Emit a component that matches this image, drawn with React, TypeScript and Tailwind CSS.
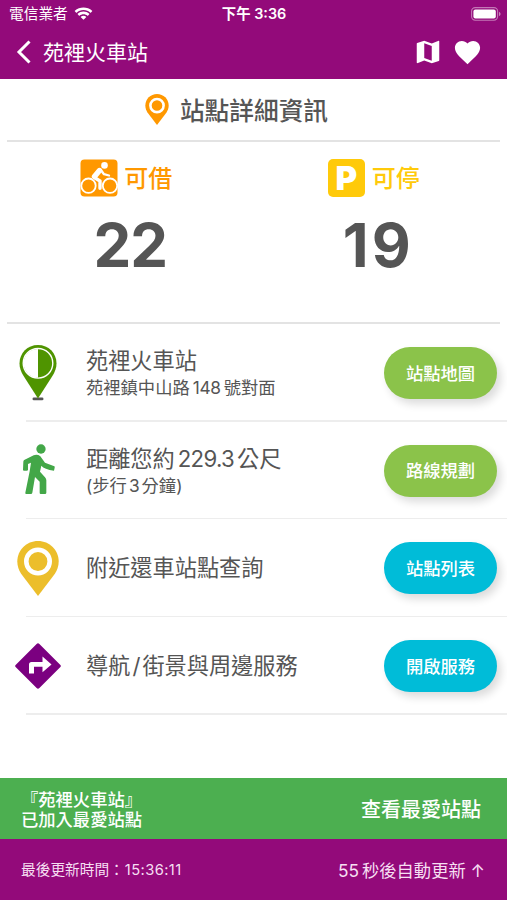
import React from 'react';
import { IoMdMap, IoMdHeart } from 'react-icons/io';

interface IconProps {
  className?: string;
}

const IconWifi: React.FC<IconProps> = ({ className }) => (
  <svg viewBox="0 0 18 13" className={className} fill="currentColor">
    <path d="M9 2.6c2.5 0 4.8 1 6.5 2.6.1.1.3.1.4 0l1.3-1.3c.1-.1.1-.4 0-.5C12.700-.8 5.300-.8.8 3.400c-.1.1-.1.400 0 .5l1.300 1.300c.1.1.3.1.4 0C4.200 3.600 6.500 2.600 9 2.600z" />
    <path d="M9 6.700c1.400 0 2.700.5 3.700 1.400.1.1.3.1.5 0l1.300-1.300c.1-.1.1-.4 0-.5-3.100-2.900-7.900-2.900-11 0-.1.1-.1.4 0 .5l1.300 1.300c.1.1.3.1.5 0 1-.9 2.300-1.400 3.700-1.400z" />
    <path d="M11.500 9.600c.1-.1.1-.4 0-.5-1.400-1.200-3.600-1.200-5 0-.1.1-.1.4 0 .5l2.200 2.200c.2.2.4.2.6 0z" />
  </svg>
);

const IconBattery: React.FC<IconProps> = ({ className }) => (
  <svg viewBox="0 0 30 14" className={className}>
    <rect x="0.600" y="0.600" width="26" height="12.600" rx="3.600" fill="none" stroke="#fff" strokeOpacity="0.45" strokeWidth="1.100" />
    <rect x="2.400" y="2.400" width="22.400" height="9" rx="2" fill="#fff" />
    <path d="M28 4.800c1 .5 1.500 1.200 1.500 2.100S29 8.500 28 9z" fill="#fff" fillOpacity="0.5" />
  </svg>
);

const IconPin: React.FC<IconProps> = ({ className }) => (
  <svg viewBox="0 0 42 55" className={className}>
    <path d="M21 0C9.400 0 .3 9 .3 20.600c0 4.600 1.500 8.500 3.800 12.200L21 55l16.900-22.200c2.300-3.700 3.800-7.600 3.800-12.200C41.700 9 32.600 0 21 0z" fill="currentColor" />
    <circle cx="21" cy="20.500" r="11.700" fill="none" stroke="#fff" strokeWidth="4.600" />
  </svg>
);

const IconStationPin: React.FC<IconProps> = ({ className }) => (
  <svg viewBox="0 0 38 56" className={className}>
    <rect x="13.500" y="52.500" width="11" height="2.800" rx="1.400" fill="#555" />
    <path d="M19 0C8.500 0 .5 8 .5 18.400c0 4.500 1.500 8.300 4.100 12.500L19 53.500l14.400-22.600c2.600-4.200 4.100-8 4.100-12.500C37.500 8 29.500 0 19 0z" fill="#4f9400" />
    <circle cx="19" cy="18.300" r="14.800" fill="none" stroke="#fff" strokeWidth="1.400" />
    <path d="M19 3.900a14.400 14.400 0 0 0 0 28.800z" fill="#fff" />
  </svg>
);

const IconWalk: React.FC<IconProps> = ({ className }) => (
  <svg viewBox="0 0 96 150" className={className} fill="currentColor">
    <circle cx="54" cy="15" r="14" />
    <path d="M5 47 32 34q11-4 20 3l14 19 28 11q2 1 1 4l-2 9q-29-4-38-15l-4 18 15 17q4 4 4 9v37q0 4-4 4H53q-3 0-3-4v-33L36 99l-8 47q-1 4-4 4H10q-4 0-3-4l13-64 4-26-9 4v17q0 3-4 3H3q-3 0-3-3l1-24q0-4 4-6z" />
  </svg>
);

const IconBike: React.FC<IconProps> = ({ className }) => (
  <svg viewBox="0 0 38 38" className={className}>
    <rect x="0.500" y="0.500" width="37" height="37" rx="4" fill="#ff9800" />
    <g fill="none" stroke="#fff" strokeLinecap="round" strokeLinejoin="round">
      <circle cx="8.500" cy="26.700" r="7.200" strokeWidth="1.800" />
      <circle cx="30" cy="26.700" r="7.200" strokeWidth="1.800" />
      <path d="M19.500 11.500l-5 6" strokeWidth="5.400" />
      <path d="M20.500 10.500l3.500 4.700 5 1.300" strokeWidth="2.300" />
      <path d="M14.300 18.500l5.700 3.500v7.200" strokeWidth="3.400" />
    </g>
    <circle cx="24.500" cy="6.400" r="3.300" fill="#fff" />
  </svg>
);

const IconDirections: React.FC<IconProps> = ({ className }) => (
  <svg viewBox="0 0 46 46" className={className}>
    <path d="M21.600 1 .6 22q-.9 1 0 2l21 21q1.400 1.400 2.800 0l21-21q.9-1 0-2l-21-21q-1.400-1.400-2.800 0z" fill="#7b0080" />
    <path d="M14 30.500v-9q0-2.500 2.500-2.500H27.500v-5.500l9 8-9 7.800v-5.600H19v6.800z" fill="#fff" />
  </svg>
);

interface Row {
  icon: React.ReactNode;
  title: React.ReactNode;
  sub?: React.ReactNode;
  action: string;
  color: string;
}

const ROWS: Row[] = [
  {
    icon: <IconStationPin className="w-[38px] h-[56px]" />,
    title: '苑裡火車站',
    sub: <>苑裡鎮中山路<span className="mx-[3px] tracking-[-0.3px]">148</span>號對面</>,
    action: '站點地圖',
    color: 'bg-[#8bc34a]',
  },
  {
    icon: <IconWalk className="w-[32px] h-[50px] ml-[2px] -mt-[4px] text-[#43a748]" />,
    title: <>距離您約<span className="mx-[3px] tracking-[-0.700px]">229.3</span>公尺</>,
    sub: <>(步行<span className="mx-[2px]">3</span>分鐘)</>,
    action: '路線規劃',
    color: 'bg-[#8bc34a]',
  },
  {
    icon: <IconPin className="w-[42px] h-[55px] text-[#ecbe2b]" />,
    title: '附近還車站點查詢',
    action: '站點列表',
    color: 'bg-[#00bcd8]',
  },
  {
    icon: <IconDirections className="w-[46px] h-[46px]" />,
    title: <>導航<span className="mx-[2px]">/</span>街景與周邊服務</>,
    action: '開啟服務',
    color: 'bg-[#00bcd8]',
  },
];

const App: React.FC = () => {
  return (
    <div className="w-[507px] h-[900px] flex flex-col overflow-hidden whitespace-nowrap bg-white text-[#555] font-['Inter','Noto_Sans_CJK_TC',sans-serif]">
      {/* Status bar and nav */}
      <header className="h-[79px] shrink-0 bg-[#930a7a] text-white">
        <div className="h-[27px] grid grid-cols-3 items-center pt-px pl-[9px] pr-[6px] text-[14.700px] leading-none">
          <div className="flex items-center gap-[6px]">
            <span className="pt-px">電信業者</span>
            <IconWifi className="w-[19px] h-[14px]" />
          </div>
          <div className="text-center font-semibold text-[14.400px] pt-px pr-[2px]">下午 3:36</div>
          <IconBattery className="w-[30px] h-[14px] justify-self-end -mt-px" />
        </div>
        <div className="h-[50px] flex items-center pl-[16px] pr-[24px]">
          <svg viewBox="0 0 15 24" className="w-[15px] h-[24px]" fill="none" stroke="currentColor" strokeWidth="3">
            <path d="M13.500 1.500 3 12l10.500 10.500" />
          </svg>
          <span className="ml-[12px] pt-px text-[21px] leading-none">苑裡火車站</span>
          <IoMdMap className="ml-auto w-[30px] h-[30px]" />
          <IoMdHeart className="ml-[9px] w-[31px] h-[31px]" />
        </div>
      </header>

      {/* Title */}
      <div className="h-[61px] shrink-0 flex items-center justify-center pr-[38px]">
        <IconPin className="w-[24px] h-[31px] ml-[4px] text-[#ff9800]" />
        <h1 className="ml-[11px] pt-[3px] text-[24.700px] leading-none font-medium">站點詳細資訊</h1>
      </div>

      {/* Counters */}
      <div className="h-[184px] shrink-0 mx-[7px] border-y-2 border-[#e3e3e3] grid grid-cols-2 pt-[17px]">
        <div className="flex flex-col items-center pr-[8px]">
          <div className="flex items-center gap-[6px] text-[#ff9800] text-[24px] leading-none font-medium">
            <IconBike className="w-[38px] h-[38px]" />
            <span className="pt-[2px]">可借</span>
          </div>
          <div className="mt-[18px] ml-[8px] text-[60px] leading-[60px] tracking-[-1px] font-bold">22</div>
        </div>
        <div className="flex flex-col items-center pr-[6px]">
          <div className="flex items-center gap-[7px] text-[#ffca0a] text-[24px] leading-none font-medium">
            <div className="w-[37px] h-[38px] rounded-[5px] bg-[#ffca0a] text-white text-[33px] leading-[38px] text-center font-black">P</div>
            <span className="pt-[2px]">可停</span>
          </div>
          <div className="mt-[18px] ml-[9px] text-[60px] leading-[60px] tracking-[3px] font-bold">19</div>
        </div>
      </div>

      {/* Rows */}
      <div className="shrink-0">
        {ROWS.map((row) => (
          <div key={row.action} className="h-[97.700px] flex items-center relative">
            <div className="w-[76px] flex justify-center shrink-0">{row.icon}</div>
            <div className={`ml-[10px] flex-1 ${row.sub ? 'pt-[2px]' : ''}`}>
              <p className="text-[22.200px] leading-[28px]">{row.title}</p>
              {row.sub && <p className="text-[17.300px] leading-[26px]">{row.sub}</p>}
            </div>
            <button className={`w-[113px] h-[52px] mr-[10px] pt-px rounded-full text-white text-[17.300px] leading-none font-medium shadow-[4px_5px_8px_rgba(0,0,0,0.14)] ${row.color}`}>
              {row.action}
            </button>
            <div className="absolute bottom-0 left-[26px] right-0 h-[1.500px] bg-[#ededed]"></div>
          </div>
        ))}
      </div>

      {/* Favorite toast */}
      <div className="mt-auto h-[61px] shrink-0 flex items-center justify-between pl-[21px] pr-[26px] bg-[#4caf50] text-white font-medium">
        <p className="text-[17.300px] leading-[20px] pt-[2px]">
          『苑裡火車站』
          <br />
          已加入最愛站點
        </p>
        <span className="text-[20px] leading-none pt-[2px]">查看最愛站點</span>
      </div>

      {/* Footer */}
      <footer className="h-[61px] shrink-0 flex items-center justify-between pl-[21px] pr-[22px] bg-[#930a7a] text-[#f6dff2] leading-none">
        <span className="text-[14.700px] pt-px">最後更新時間：<span className="ml-px tracking-[0.400px]">15:36:11</span></span>
        <span className="text-[17.300px] pt-[2px]">
          55<span className="ml-[3px]">秒後自動更新</span> ↑
        </span>
      </footer>
    </div>
  );
};

export default App;
